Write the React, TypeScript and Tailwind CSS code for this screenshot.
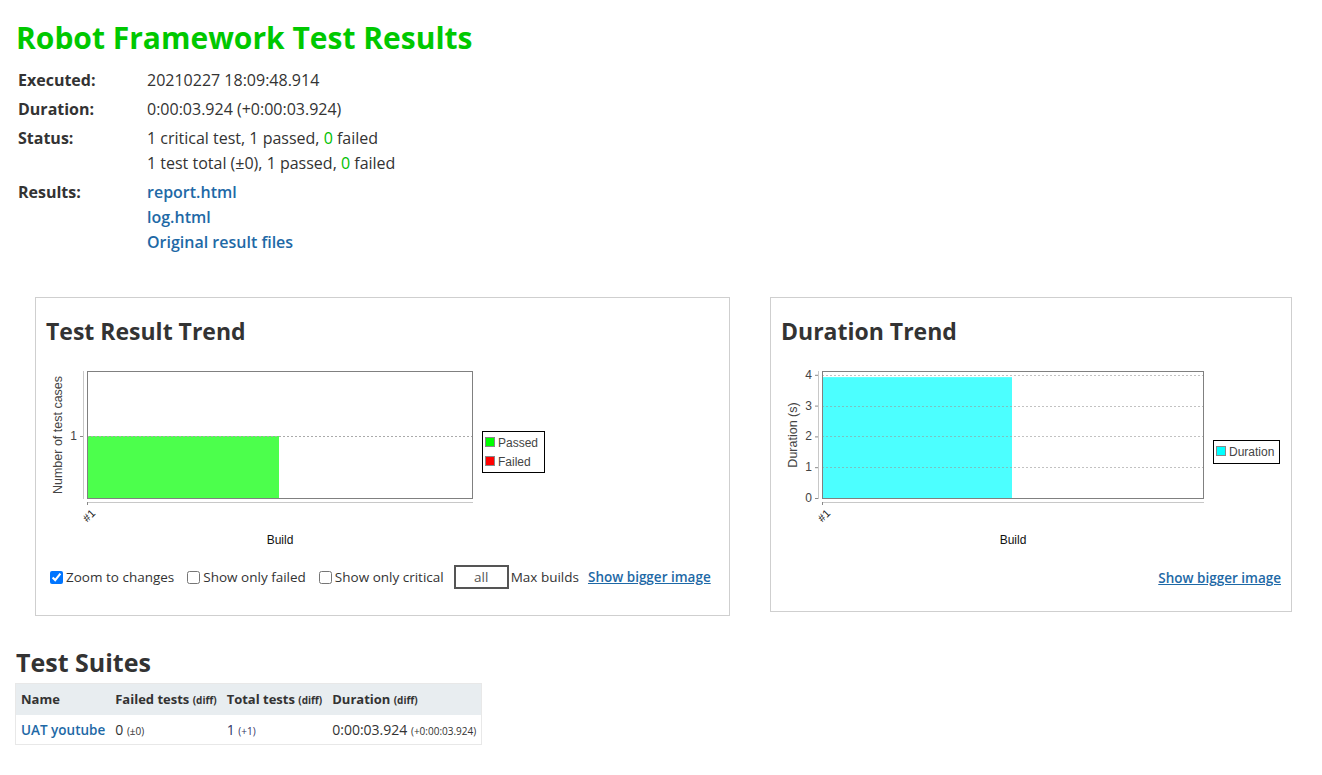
import React from "react";

const SANS = "font-['Segoe_UI','Open_Sans',sans-serif]";

function InfoRow({ label, children }: { label: string; children: React.ReactNode }) {
  return (
    <tr>
      <th className="w-[129px] px-[2px] py-[2px] text-left align-top font-bold">{label}</th>
      <td className="px-[2px] py-[2px] align-top">{children}</td>
    </tr>
  );
}

function ResultChart() {
  return (
    <svg width="500" height="190" className="font-['Liberation_Sans',Arial,sans-serif]">
      <line x1="37.5" y1="11" x2="37.5" y2="139" stroke="#c8c8c8" />
      <line x1="34" y1="76.5" x2="37" y2="76.5" stroke="#888" />
      <text x="31" y="80" fontSize="12" textAnchor="end" fill="#444">1</text>
      <rect x="41" y="76" width="192" height="62" fill="#4cff4c" />
      <line x1="41" y1="76.5" x2="426" y2="76.5" stroke="#aaa" strokeDasharray="2 2" />
      <rect x="41.5" y="11.5" width="385" height="127" fill="none" stroke="#808080" />
      <line x1="41" y1="142.5" x2="427" y2="142.5" stroke="#c8c8c8" />
      <line x1="41.5" y1="142" x2="41.5" y2="145" stroke="#888" />
      <text x="0" y="0" fontSize="11" fill="#222" transform="translate(50 154) rotate(-45)" textAnchor="end">#1</text>
      <text x="234" y="184" fontSize="12" textAnchor="middle" fill="#111">Build</text>
      <text x="0" y="0" fontSize="12.5" fill="#444" textAnchor="middle" transform="translate(16 75) rotate(-90)">Number of test cases</text>
      <rect x="436.5" y="71.5" width="62" height="41" fill="#fff" stroke="#000" />
      <rect x="439.5" y="77.5" width="9" height="9" fill="#00ff00" stroke="#888" />
      <text x="452" y="87" fontSize="12" fill="#444">Passed</text>
      <rect x="439.5" y="96.5" width="9" height="9" fill="#ff0000" stroke="#888" />
      <text x="452" y="106" fontSize="12" fill="#444">Failed</text>
    </svg>
  );
}

function DurationChart() {
  const y = (v: number) => 138 - v * 30.8;
  return (
    <svg width="510" height="190" className="font-['Liberation_Sans',Arial,sans-serif]">
      <line x1="37.5" y1="11" x2="37.5" y2="139" stroke="#c8c8c8" />
      <rect x="41" y={y(3.924)} width="190" height={138 - y(3.924)} fill="#4cffff" />
      {[0, 1, 2, 3, 4].map((v) => (
        <g key={v}>
          <line x1="34" y1={y(v) + 0.5} x2="37" y2={y(v) + 0.5} stroke="#888" />
          <text x="31" y={y(v) + 4} fontSize="12" textAnchor="end" fill="#444">{v}</text>
          {v > 0 && (
            <line x1="41" y1={Math.round(y(v)) + 0.5} x2="422" y2={Math.round(y(v)) + 0.5} stroke="#999" strokeOpacity="0.6" strokeDasharray="2 2" />
          )}
        </g>
      ))}
      <rect x="41.5" y="11.5" width="381" height="127" fill="none" stroke="#808080" />
      <line x1="41" y1="142.5" x2="423" y2="142.5" stroke="#c8c8c8" />
      <line x1="41.5" y1="142" x2="41.5" y2="145" stroke="#888" />
      <text x="0" y="0" fontSize="11" fill="#222" transform="translate(50 154) rotate(-45)" textAnchor="end">#1</text>
      <text x="232" y="184" fontSize="12" textAnchor="middle" fill="#111">Build</text>
      <text x="0" y="0" fontSize="12.5" fill="#444" textAnchor="middle" transform="translate(16 75) rotate(-90)">Duration (s)</text>
      <rect x="432.5" y="80.5" width="66" height="23" fill="#fff" stroke="#000" />
      <rect x="435.5" y="86.5" width="9" height="9" fill="#00ffff" stroke="#888" />
      <text x="448" y="96" fontSize="12" fill="#444">Duration</text>
    </svg>
  );
}

export default function App() {
  return (
    <div className={`${SANS} min-h-screen bg-white pl-4 pt-[18px] text-[16px] text-[#333]`}>
      <h1 className="text-[30px] font-bold leading-[40px] text-[#00c800]">Robot Framework Test Results</h1>

      <table className="mt-[8px] border-separate border-spacing-0 leading-[25px]">
        <tbody>
          <InfoRow label="Executed:">20210227 18:09:48.914</InfoRow>
          <InfoRow label="Duration:">0:00:03.924 (+0:00:03.924)</InfoRow>
          <InfoRow label="Status:">
            <div>
              1 critical test, 1 passed, <span className="text-[#00c000]">0</span> failed
            </div>
            <div>
              1 test total (±0), 1 passed, <span className="text-[#00c000]">0</span> failed
            </div>
          </InfoRow>
          <InfoRow label="Results:">
            <div className="flex flex-col font-semibold text-[#1e69a6]">
              <a href="#">report.html</a>
              <a href="#">log.html</a>
              <a href="#">Original result files</a>
            </div>
          </InfoRow>
        </tbody>
      </table>

      <div className="mt-[40px] flex items-start gap-[40px] pl-[19px]">
        <div className="h-[319px] w-[695px] border border-[#cfcfcf] px-[10px] pt-[17px]">
          <h2 className="text-[23px] font-bold leading-[32px] text-[#333]">Test Result Trend</h2>
          <div className="mt-[13px]">
            <ResultChart />
          </div>
          <div className="mt-[15px] flex items-center whitespace-nowrap text-[13.5px] text-[#333]">
            <label className="ml-[4px] flex items-center gap-[3px]">
              <input type="checkbox" defaultChecked className="h-[13px] w-[13px] accent-[#0075ff]" />
              Zoom to changes
            </label>
            <label className="ml-[13px] flex items-center gap-[3px]">
              <input type="checkbox" className="h-[13px] w-[13px]" />
              Show only failed
            </label>
            <label className="ml-[13px] flex items-center gap-[3px]">
              <input type="checkbox" className="h-[13px] w-[13px]" />
              Show only critical
            </label>
            <input
              readOnly
              value="all"
              className="ml-[10px] h-[24px] w-[55px] border-2 border-[#555] text-center text-[13.5px] text-[#555]"
            />
            <span className="ml-[2px]">Max builds</span>
            <a href="#" className="ml-[9px] font-semibold text-[#1e69a6] underline">Show bigger image</a>
          </div>
        </div>

        <div className="h-[315px] w-[522px] border border-[#cfcfcf] px-[10px] pt-[17px]">
          <h2 className="text-[23px] font-bold leading-[32px] text-[#333]">Duration Trend</h2>
          <div className="mt-[13px]">
            <DurationChart />
          </div>
          <div className="mt-[18px] flex justify-end whitespace-nowrap text-[13.5px]">
            <a href="#" className="font-semibold text-[#1e69a6] underline">Show bigger image</a>
          </div>
        </div>
      </div>

      <h2 className="mt-[29px] text-[25px] font-bold leading-[34px] text-[#333]">Test Suites</h2>
      <table className="mt-[4px] -ml-px border-collapse whitespace-nowrap border border-[#e8e8e8] text-[13px]">
        <thead>
          <tr className="bg-[#e8edf0] text-left">
            <th className="h-[31px] px-[5px] font-bold">Name</th>
            <th className="px-[5px] font-bold">
              Failed tests <span className="text-[10px]">(diff)</span>
            </th>
            <th className="px-[5px] font-bold">
              Total tests <span className="text-[10px]">(diff)</span>
            </th>
            <th className="px-[5px] font-bold">
              Duration <span className="text-[10px]">(diff)</span>
            </th>
          </tr>
        </thead>
        <tbody className="text-[14px]">
          <tr>
            <td className="h-[30px] px-[5px]">
              <a href="#" className="text-[13.5px] font-semibold text-[#1e69a6]">UAT youtube</a>
            </td>
            <td className="px-[5px]">
              0 <span className="text-[10px]">(±0)</span>
            </td>
            <td className="px-[5px] text-[#333366]">
              1 <span className="text-[10px]">(+1)</span>
            </td>
            <td className="px-[5px]">
              0:00:03.924 <span className="text-[10px]">(+0:00:03.924)</span>
            </td>
          </tr>
        </tbody>
      </table>
    </div>
  );
}
